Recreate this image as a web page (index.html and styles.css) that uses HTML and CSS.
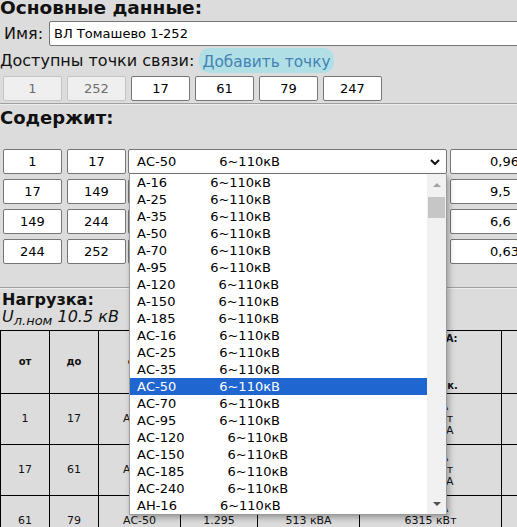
FILE: index.html
```html
<!DOCTYPE html>
<html lang="ru">
<head>
<meta charset="utf-8">
<title>Линия</title>
<link rel="stylesheet" href="styles.css">
</head>
<body>
<main class="page">
  <h2 class="title">Основные данные:</h2>
  <div class="name-row">
    <label class="name-label" for="name">Имя:</label>
    <input id="name" class="name-input" type="text" value="ВЛ Томашево 1-252">
  </div>
  <div class="points-head">
    <span class="points-label">Доступны точки связи:</span>
    <button class="add-btn" type="button">Добавить точку</button>
  </div>
  <div class="points">
    <input class="point" type="text" value="1" disabled>
    <input class="point" type="text" value="252" disabled>
    <input class="point" type="text" value="17">
    <input class="point" type="text" value="61">
    <input class="point" type="text" value="79">
    <input class="point" type="text" value="247">
  </div>
  <div class="rule"></div>
  <h2 class="title title-contains">Содержит:</h2>
  <div class="segments">
    <div class="seg-row">
      <input class="seg-num" type="text" value="1">
      <input class="seg-num" type="text" value="17">
      <div class="select-wrap">
        <div class="select">
          <span class="opt-name">АС-50</span><span class="opt-volt">6~110кВ</span>
          <svg class="chev" width="10" height="6" viewBox="0 0 10 6"><path d="M1 1L5 5L9 1" fill="none" stroke="#111" stroke-width="2"/></svg>
        </div>
        <div class="dropdown">
          <div class="dd-list">
            <div class="dd-item"><span class="opt-name">А-16</span><span class="opt-volt">6~110кВ</span></div>
            <div class="dd-item"><span class="opt-name">А-25</span><span class="opt-volt">6~110кВ</span></div>
            <div class="dd-item"><span class="opt-name">А-35</span><span class="opt-volt">6~110кВ</span></div>
            <div class="dd-item"><span class="opt-name">А-50</span><span class="opt-volt">6~110кВ</span></div>
            <div class="dd-item"><span class="opt-name">А-70</span><span class="opt-volt">6~110кВ</span></div>
            <div class="dd-item"><span class="opt-name">А-95</span><span class="opt-volt">6~110кВ</span></div>
            <div class="dd-item"><span class="opt-name">А-120</span><span class="opt-volt">6~110кВ</span></div>
            <div class="dd-item"><span class="opt-name">А-150</span><span class="opt-volt">6~110кВ</span></div>
            <div class="dd-item"><span class="opt-name">А-185</span><span class="opt-volt">6~110кВ</span></div>
            <div class="dd-item"><span class="opt-name">АС-16</span><span class="opt-volt">6~110кВ</span></div>
            <div class="dd-item"><span class="opt-name">АС-25</span><span class="opt-volt">6~110кВ</span></div>
            <div class="dd-item"><span class="opt-name">АС-35</span><span class="opt-volt">6~110кВ</span></div>
            <div class="dd-item dd-sel"><span class="opt-name">АС-50</span><span class="opt-volt">6~110кВ</span></div>
            <div class="dd-item"><span class="opt-name">АС-70</span><span class="opt-volt">6~110кВ</span></div>
            <div class="dd-item"><span class="opt-name">АС-95</span><span class="opt-volt">6~110кВ</span></div>
            <div class="dd-item"><span class="opt-name">АС-120</span><span class="opt-volt">6~110кВ</span></div>
            <div class="dd-item"><span class="opt-name">АС-150</span><span class="opt-volt">6~110кВ</span></div>
            <div class="dd-item"><span class="opt-name">АС-185</span><span class="opt-volt">6~110кВ</span></div>
            <div class="dd-item"><span class="opt-name">АС-240</span><span class="opt-volt">6~110кВ</span></div>
            <div class="dd-item"><span class="opt-name">АН-16</span><span class="opt-volt">6~110кВ</span></div>
          </div>
          <div class="dd-scroll">
            <div class="sb-btn"><span class="tri-up"></span></div>
            <div class="sb-thumb"></div>
            <div class="sb-space"></div>
            <div class="sb-btn sb-btn-down"><span class="tri-down"></span></div>
          </div>
        </div>
      </div>
      <input class="seg-len" type="text" value="0,96">
    </div>
    <div class="seg-row">
      <input class="seg-num" type="text" value="17">
      <input class="seg-num" type="text" value="149">
      <div class="select-wrap">
        <div class="select"><span class="opt-name">АС-50</span><span class="opt-volt">6~110кВ</span></div>
      </div>
      <input class="seg-len" type="text" value="9,5">
    </div>
    <div class="seg-row">
      <input class="seg-num" type="text" value="149">
      <input class="seg-num" type="text" value="244">
      <div class="select-wrap">
        <div class="select"><span class="opt-name">АС-50</span><span class="opt-volt">6~110кВ</span></div>
      </div>
      <input class="seg-len" type="text" value="6,6">
    </div>
    <div class="seg-row">
      <input class="seg-num" type="text" value="244">
      <input class="seg-num" type="text" value="252">
      <div class="select-wrap">
        <div class="select"><span class="opt-name">АС-50</span><span class="opt-volt">6~110кВ</span></div>
      </div>
      <input class="seg-len" type="text" value="0,63">
    </div>
  </div>
  <div class="rule rule-load"></div>
  <h3 class="subtitle">Нагрузка:</h3>
  <div class="unom"><i>U<sub>л.ном</sub> 10.5 кВ</i></div>
  <table class="load">
    <colgroup>
      <col class="c-from"><col class="c-to"><col class="c-wire"><col class="c-len"><col class="c-s"><col class="c-calc"><col class="c-rest">
    </colgroup>
    <thead>
      <tr>
        <th>от</th><th>до</th><th>сеч.</th><th>L, км</th><th>S, кВА</th>
        <th class="th-calc">Ток Iр, А:<br>Рр,<br>Sр,<br>расч.<br>при пуск.</th><th></th>
      </tr>
    </thead>
    <tbody>
      <tr><td>1</td><td>17</td><td>АС-50</td><td>0.960</td><td>513 кВА</td><td class="td-calc">29.6 А<br>461 кВт<br>513 кВА</td><td></td></tr>
      <tr><td>17</td><td>61</td><td>АС-50</td><td>9.500</td><td>513 кВА</td><td class="td-calc">29.6 А<br>461 кВт<br>513 кВА</td><td></td></tr>
      <tr><td>61</td><td>79</td><td>АС-50</td><td>1.295</td><td>513 кВА</td><td class="td-calc">29.6 А<br>6315 кВт<br>7 400 кВА</td><td></td></tr>
    </tbody>
  </table>
</main>
</body>
</html>
```

FILE: styles.css
```css
html, body {
  margin: 0;
  padding: 0;
  overflow: hidden;
  background: #dcdcdc;
}

body {
  font-family: "DejaVu Sans", Verdana, sans-serif;
  color: #111;
}

.title {
  margin: -1px 0 0;
  font-size: 18.5px;
  line-height: 18px;
  font-weight: bold;
}

.title-contains {
  margin-top: 4px;
  font-size: 18px;
}

.name-row {
  display: flex;
  align-items: center;
  height: 25px;
  margin-top: 4px;
}

.name-label {
  flex: none;
  width: 49px;
  padding-left: 4px;
  box-sizing: border-box;
  font-size: 16px;
}

.name-input {
  flex: none;
  width: 520px;
  height: 25px;
  box-sizing: border-box;
  border: 1px solid #767676;
  border-radius: 2px;
  padding: 0 4px;
  background: #fff;
  color: #000;
  font: 13px "DejaVu Sans", Verdana, sans-serif;
}

.points-head {
  display: flex;
  align-items: center;
  height: 25px;
  margin-top: 2px;
  font-size: 16px;
}

.add-btn {
  height: 25px;
  margin-left: 5px;
  padding: 2px 3px 0;
  border: none;
  border-radius: 10px;
  background: #b0e0e6;
  color: #4682b4;
  font: 15.4px "DejaVu Sans", Verdana, sans-serif;
}

.points {
  display: flex;
  gap: 5px;
  margin-top: 3px;
  padding-left: 3px;
}

.point, .seg-num {
  flex: none;
  width: 59px;
  height: 25px;
  box-sizing: border-box;
  border: 1px solid #767676;
  border-radius: 2px;
  padding: 0;
  background: #fff;
  color: #000;
  text-align: center;
  font: 13px "DejaVu Sans", Verdana, sans-serif;
}

.point:disabled {
  background: #efefef;
  border-color: #c4c4c4;
  color: #6d6d6d;
}

.rule {
  margin-top: 2px;
  border-top: 1px solid #a0a0a0;
  border-bottom: 1px solid #ececec;
}

.rule-load {
  margin-top: 23px;
}

.segments {
  display: flex;
  flex-direction: column;
  gap: 5px;
  margin-top: 22px;
}

.seg-row {
  display: flex;
  height: 25px;
  padding-left: 3px;
}

.seg-num + .seg-num {
  margin-left: 5px;
}

.select-wrap {
  position: relative;
  flex: none;
  width: 319px;
  margin-left: 2px;
}

.select {
  display: flex;
  align-items: center;
  height: 25px;
  box-sizing: border-box;
  padding: 0 6px 0 8px;
  border: 1px solid #767676;
  border-radius: 2px;
  background: #fff;
  color: #000;
  font-size: 13px;
  white-space: nowrap;
}

.opt-volt {
  margin-left: 43px;
}

.chev {
  margin-left: auto;
}

.seg-len {
  flex: none;
  width: 100px;
  height: 25px;
  margin-left: 3px;
  box-sizing: border-box;
  border: 1px solid #767676;
  border-radius: 2px;
  padding: 0 0 0 39px;
  background: #fff;
  color: #000;
  font: 13px "DejaVu Sans", Verdana, sans-serif;
}

.dropdown {
  position: absolute;
  top: 100%;
  left: 1px;
  z-index: 10;
  display: flex;
  width: 318px;
  box-sizing: border-box;
  border: 1px solid #9a9a9a;
  border-top: none;
  background: #fff;
  box-shadow: 2px 3px 6px rgba(0, 0, 0, 0.3);
}

.dd-list {
  flex: 1;
}

.dd-item {
  height: 17px;
  line-height: 17px;
  padding-left: 7px;
  color: #000;
  font-size: 13px;
  white-space: nowrap;
}

.dd-sel {
  background: #1f66d1;
  color: #fff;
}

.dd-scroll {
  display: flex;
  flex-direction: column;
  align-items: center;
  flex: none;
  width: 19px;
  background: #f1f1f1;
}

.sb-btn {
  display: flex;
  align-items: center;
  justify-content: center;
  width: 100%;
  height: 22px;
}

.sb-btn-down {
  height: 20px;
}

.tri-up, .tri-down {
  width: 0;
  height: 0;
  border-left: 4px solid transparent;
  border-right: 4px solid transparent;
}

.tri-up {
  border-bottom: 4px solid #a3a3a3;
}

.tri-down {
  border-top: 4px solid #505050;
}

.sb-thumb {
  width: 17px;
  height: 21px;
  margin-top: 1px;
  background: #c6c6c6;
}

.sb-space {
  flex: 1;
}

.subtitle {
  margin: 2px 0 0 2px;
  font-size: 16px;
  line-height: 18px;
  font-weight: bold;
}

.unom {
  padding-left: 2px;
  font-size: 16px;
  line-height: 16px;
}

.unom sub {
  font-size: 13px;
  line-height: 0;
  vertical-align: -3px;
}

.load {
  margin-top: 5px;
  width: 600px;
  table-layout: fixed;
  border-collapse: collapse;
  border: 1px solid #000;
}

.c-from { width: 49px; }
.c-to { width: 49px; }
.c-wire { width: 82px; }
.c-len { width: 77px; }
.c-s { width: 102px; }
.c-calc { width: 142px; }
.c-rest { width: 99px; }

.load th, .load td {
  border: 1px solid #000;
  padding: 0;
  text-align: center;
  vertical-align: middle;
  white-space: nowrap;
}

.load th {
  height: 62px;
  font-size: 10px;
  line-height: 11.8px;
  font-weight: bold;
}

.load td {
  height: 50px;
  font-size: 11px;
  line-height: 12px;
}
```
